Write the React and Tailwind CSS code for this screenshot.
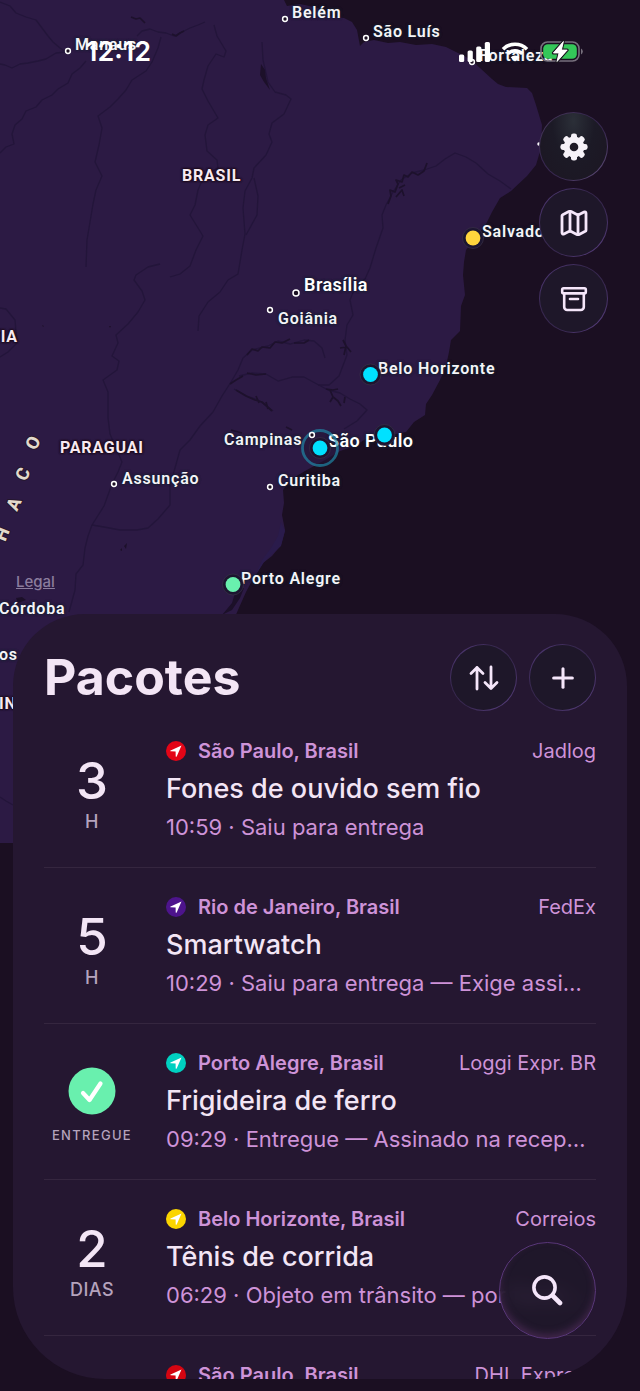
import { Map, Plus } from "lucide-react";

const cities = [
  { name: "Belém", x: 285, y: 19, dx: 7, dy: -6 },
  { name: "São Luís", x: 366, y: 38, dx: 7, dy: -6 },
  { name: "Manaus", x: 68, y: 51, dx: 7, dy: -6 },
  { name: "Fortaleza", x: 472, y: 62, dx: 7, dy: -6 },
  { name: "Goiânia", x: 270, y: 310, dx: 8, dy: 9 },
  { name: "Assunção", x: 114, y: 484, dx: 8, dy: -5 },
  { name: "Curitiba", x: 270, y: 487, dx: 8, dy: -6 },
];

const labels = [
  { name: "Salvador", x: 482, y: 232 },
  { name: "Belo Horizonte", x: 378, y: 369 },
  { name: "Campinas", x: 224, y: 440 },
  { name: "Porto Alegre", x: 241, y: 579 },
  { name: "Córdoba", x: -1, y: 609 },
  { name: "os", x: -1, y: 655 },
];

const bigLabels = [
  { name: "Brasília", x: 304, y: 285 },
  { name: "São Paulo", x: 328, y: 441 },
];

const countries = [
  { name: "BRASIL", x: 182, y: 176 },
  { name: "PARAGUAI", x: 60, y: 448 },
  { name: "TIA", x: -10, y: 337 },
  { name: "IN", x: -1, y: 704 },
];

const rivers = [
  "M0 2 L10 6 L16 13 L26 17 L36 20 L42 28 L48 36 L53 42 L60 48 L66 52 L56 53 L46 59 L38 61 L28 63 L20 64 L12 68 L5 65 L0 64",
  "M86 61 L80 68 L72 74 L68 83 L58 89 L52 95 L42 100 L36 107 L26 111 L22 119 L15 125 L12 134 L14 144 L6 147 L0 153",
  "M137 36 L142 31 L150 29 L158 32 L166 33 L174 36 L182 32 L190 28 L198 25 L205 22",
  "M161 37 L158 48 L152 62 L146 71 L132 80 L126 90 L118 99 L110 107 L98 116 L102 128 L99 145 L95 162 L102 176 L96 190 L93 204 L90 222 L87 240 L86 267",
  "M214 25 L217 36 L226 51 L224 57 L216 54 L208 66 L204 80 L202 89 L208 101 L218 118 L208 125 L205 135 L207 151 L217 160 L218 168 L204 176 L198 190 L195 205 L190 215 L203 236 L196 250 L190 266 L180 274 L170 277",
  "M262 42 L263 60 L268 82 L275 92 L286 95 L291 99 L284 114 L272 123 L269 134 L272 142 L266 155 L254 168 L252 178 L245 191 L243 208 L245 234 L242 250 L238 274 L228 280 L220 292 L208 302 L199 316 L198 331",
  "M254 178 L258 196 L257 215 L246 235",
  "M160 264 L148 267 L136 275 L134 280 L142 291 L145 300 L138 312 L128 324 L116 335 L118 343 L112 356 L119 361 L117 370 L103 380 L108 392 L108 418 L110 434 L116 448 L122 462 L118 472 L112 484 L104 506 L92 525 L88 536 L85 548 L83 565 L76 574 L75 590 L69 612",
  "M511 189 L500 181 L488 174 L476 163 L466 157 L455 153 L445 159 L436 166 L424 170 L412 173 L401 180 L393 192 L386 205 L382 215 L383 228 L376 248 L370 268 L365 279 L356 285 L350 300 L353 315 L347 325 L345 340 L347 355 L339 376 L329 385 L318 385",
  "M325 358 L322 348 L314 341 L304 340 L290 344 L278 341 L268 346 L252 350 L243 358 L238 370 L231 382 L222 396 L213 412 L200 426 L190 440 L180 450 L175 468 L170 485 L170 505 L158 519 L148 528 L137 530 L120 530 L104 527 L92 525",
  "M239 376 L252 373 L266 374 L278 381 L292 377 L304 377 L315 383 L328 390 L340 393 L350 399 L360 404 L367 410 L357 421 L344 429",
  "M234 389 L247 396 L258 400 L267 406 L273 411",
  "M0 797 L6 801 L13 805 M0 357 L8 352 L17 343 L15 320 L6 309 L0 308",
];

// flooded stretches of the rivers, darker and more ragged
const reservoirs = [
  "M388 204 L391 196 L390 190 L395 192 L398 184 L396 180 L402 182 L404 175 L408 177 L412 172 L418 175 L424 171 L427 163",
  "M396 197 L402 190 L404 196 M399 188 L405 185",
  "M131 17 L136 19 L140 18 L145 23",
  "M172 34 L176 36 L180 33 L184 31",
  "M343 340 L346 346 L344 355 M340 348 L347 347 L351 352",
  "M247 355 L252 349 L258 351 L262 347 L270 348 L275 342 L282 343 L290 339 M294 343 L304 343 L309 340",
  "M230 384 L236 380 L243 376 M247 373 L256 375 L266 374",
  "M236 390 L246 396 L255 400 L262 402 L272 411 M256 396 L259 403 M266 402 L268 409",
  "M326 389 L333 390 L338 389 M330 390 L333 397 L330 402 M333 397 L338 401 L341 406 M345 397 L344 403",
  "M231 430 L242 433 M286 427 L292 430",
];

const lakes = [
  "M261 64 L265 70 L266 78 L270 90 L264 82 L260 75 Z",
  "M120 550 L122 548 L122 551 Z M124 546 L127 543 L126 549 Z",
  "M237 586 L244 588 L240 598 L232 610 L222 615 L232 603 Z",
  "M42 325 L44 326 L43 327 Z M109 326 L111 326 L110 328 Z",
  "M16 598 L22 597 L26 600 L18 603 Z",
];

const packages = [
  { count: "3", unit: "H", pin: "bg-[#e30517]", place: "São Paulo, Brasil", carrier: "Jadlog", title: "Fones de ouvido sem fio", status: "10:59 · Saiu para entrega" },
  { count: "5", unit: "H", pin: "bg-[#4d148c]", place: "Rio de Janeiro, Brasil", carrier: "FedEx", title: "Smartwatch", status: "10:29 · Saiu para entrega — Exige assinatura" },
  { delivered: true, unit: "ENTREGUE", pin: "bg-[#00d0c0]", place: "Porto Alegre, Brasil", carrier: "Loggi Expr. BR", title: "Frigideira de ferro", status: "09:29 · Entregue — Assinado na recepção" },
  { count: "2", unit: "DIAS", pin: "bg-[#fbd500]", place: "Belo Horizonte, Brasil", carrier: "Correios", title: "Tênis de corrida", status: "06:29 · Objeto em trânsito — por favor aguarde" },
  { count: "4", unit: "DIAS", pin: "bg-[#d40511]", place: "São Paulo, Brasil", carrier: "DHL Express", title: "Cafeteira", status: "05:10 · Em trânsito" },
];

const Label = ({ x, y, className, children }) => (
  <span
    className={`absolute -translate-y-1/2 whitespace-nowrap ${className}`}
    style={{ left: x, top: y }}
  >
    {children}
  </span>
);

const cityText = "text-base font-semibold tracking-wider text-[#f4f4f8] [text-shadow:0_0_3px_#14202f,0_0_3px_#14202f]";
const bigCityText = "text-lg font-semibold tracking-wide text-white [text-shadow:0_0_3px_#14202f,0_0_3px_#14202f]";
const countryText = "text-base font-bold tracking-wider text-[#f7e9f1] [text-shadow:0_0_2px_#1c0a14,0_0_2px_#1c0a14,0_0_2px_#1c0a14,0_0_3px_#1c0a14]";

const Pin = ({ x, y, color }) => (
  <g>
    <circle cx={x} cy={y} r="10.5" fill="#1c1530" stroke="#3a3047" strokeWidth="0.7" />
    <circle cx={x} cy={y} r="7.4" fill={color} />
  </g>
);

const CityDot = ({ x, y, r = 2.4 }) => (
  <circle cx={x} cy={y} r={r} fill="#1b0f22" stroke="#fff" strokeWidth="1.5" />
);

const MapView = () => (
  <div className="absolute inset-0 overflow-hidden font-[Roboto,sans-serif]">
    <svg width="640" height="900" viewBox="0 0 640 900" className="absolute top-0 left-0" aria-hidden="true">
      <path
        d="M0 0 H284 L287 6 L300 4 L318 8 L330 16 L344 18 L352 22 L357 30 L360 46 L364 42 L374 40 L388 43 L400 42 L416 45 L432 44 L446 47 L458 53 L470 59 L480 68 L492 79 L498 84 L506 87 L527 88 L532 93 L536 105 L542 125 L541 148 L536 165 L527 176 L511 191 L500 198 L492 212 L486 224 L474 240 L466 250 L464 262 L463 275 L465 295 L461 306 L460 331 L451 340 L449 352 L446 366 L440 380 L432 395 L426 404 L425 415 L414 422 L406 432 L385 436 L370 436 L355 446 L340 451 L325 460 L305 471 L290 480 L283 490 L284 503 L282 515 L285 530 L281 545 L272 556 L263 563 L254 577 L246 592 L238 610 L225 640 L150 843 H0 Z"
        fill="#2c1a44"
      />
      <path d="M281 522 L285 531 L281 546 L264 562 L254 578 L262 560 L271 548 L278 536 Z" fill="#2a1b4b" />
      <g fill="none" stroke="#23153a" strokeWidth="1.3" strokeLinejoin="round">
        {rivers.map((d) => (
          <path key={d} d={d} />
        ))}
      </g>
      <g fill="none" stroke="#1d112c" strokeWidth="1.7" strokeLinejoin="round">
        {reservoirs.map((d) => (
          <path key={d} d={d} />
        ))}
      </g>
      <g fill="#1c1029">
        {lakes.map((d) => (
          <path key={d} d={d} />
        ))}
      </g>
      <circle cx="320" cy="448" r="17.5" fill="#221638" fillOpacity="0.5" />
    </svg>

    {cities.map((c) => (
      <Label key={c.name} x={c.x + c.dx} y={c.y + c.dy} className={cityText}>{c.name}</Label>
    ))}
    {labels.map((c) => (
      <Label key={c.name} x={c.x} y={c.y} className={cityText}>{c.name}</Label>
    ))}
    {bigLabels.map((c) => (
      <Label key={c.name} x={c.x} y={c.y} className={bigCityText}>{c.name}</Label>
    ))}
    {countries.map((c) => (
      <Label key={c.name} x={c.x} y={c.y} className={countryText}>{c.name}</Label>
    ))}

    <svg width="640" height="900" viewBox="0 0 640 900" className="absolute top-0 left-0">
      <g fill="#e3d9cc" stroke="#24172b" strokeWidth="2" paintOrder="stroke" fontSize="18" fontWeight="800" textAnchor="middle">
        <text transform="translate(33 443) rotate(-62)" y="6">O</text>
        <text transform="translate(23 474) rotate(-64)" y="6">C</text>
        <text transform="translate(14 504) rotate(-66)" y="6">A</text>
        <text transform="translate(2 534) rotate(-68)" y="6">H</text>
      </g>
      {cities.map((c) => (
        <CityDot key={c.name} x={c.x} y={c.y} />
      ))}
      <CityDot x={296} y={293} r={3} />
      <CityDot x={539} y={144} r={1} />
      <circle cx="320" cy="448" r="17.5" fill="none" stroke="#1f8fae" strokeOpacity="0.65" strokeWidth="2.8" />
      <CityDot x={312} y={435} />
      <Pin x={320} y={448} color="#00e1ff" />
      <Pin x={370.5} y={374.5} color="#00e1ff" />
      <Pin x={384.5} y={435} color="#00e1ff" />
      <Pin x={473} y={238} color="#ffd53d" />
      <Pin x={233} y={584.5} color="#69f0ae" />
    </svg>
  </div>
);

const StatusBar = () => (
  <div className="relative flex h-[104px] items-center justify-between pr-14 pl-[86px]">
    <time className="text-[27px] leading-8 font-semibold text-white">12:12</time>
    <div className="flex items-center gap-[11px]">
      <svg width="31" height="20" viewBox="0 0 31 20" fill="#fff" aria-label="Sinal">
        <rect x="0" y="12.5" width="5.2" height="7.5" rx="1.6" />
        <rect x="8.6" y="8.5" width="5.2" height="11.5" rx="1.6" />
        <rect x="17.2" y="4.5" width="5.2" height="15.5" rx="1.6" />
        <rect x="25.8" y="0" width="5.2" height="20" rx="1.6" />
      </svg>
      <svg width="28" height="20" viewBox="0 0 28 20" aria-label="Wi-Fi">
        <path d="M2 7.2 A17 17 0 0 1 26 7.2" fill="none" stroke="#fff" strokeWidth="3.6" />
        <path d="M6.6 11.8 A10.5 10.5 0 0 1 21.4 11.8" fill="none" stroke="#fff" strokeWidth="3.4" />
        <path d="M14 19.5 L9.7 15.2 A6.2 6.2 0 0 1 18.3 15.2 Z" fill="#fff" />
      </svg>
      <svg width="44" height="24" viewBox="0 0 44 24" aria-label="Bateria">
        <rect x="1" y="2" width="38" height="19" rx="6.5" fill="none" stroke="#77707d" strokeWidth="1.6" />
        <rect x="3.2" y="4.2" width="33.6" height="14.6" rx="4.6" fill="#34c759" />
        <path d="M41 8.5 A3.4 3.4 0 0 1 41 14.5 Z" fill="#77707d" />
        <path d="M23.4 1.5 L13.4 13 H19 L17 21.5 L27.2 10 H21.4 Z" fill="#fff" stroke="#1b1720" strokeWidth="3" strokeLinejoin="round" paintOrder="stroke" />
        <path d="M23.4 1.5 L13.4 13 H19 L17 21.5 L27.2 10 H21.4 Z" fill="#fff" stroke="#fff" strokeWidth="0.8" strokeLinejoin="round" />
      </svg>
    </div>
  </div>
);

const ringButton =
  "flex items-center justify-center rounded-full border border-transparent text-[#f5e6fa] [background:linear-gradient(#1e1729,#1e1729)_padding-box,linear-gradient(135deg,#573e80,#382850_35%,#382850_60%,#60448a)_border-box]";
const glassButton =
  "flex items-center justify-center rounded-full border border-transparent text-[#f6f2f8] [background:radial-gradient(ellipse_at_50%_12%,#2b2f38,#1c1a26_45%,#1c1622)_padding-box,linear-gradient(135deg,#4b3d5c,#382850_35%,#382850_60%,#665480)_border-box]";

const GearIcon = () => (
  <svg width="28" height="28" viewBox="-14 -14 28 28" aria-hidden="true">
    <g fill="#f6f2f8">
      {[0, 45, 90, 135].map((a) => (
        <rect key={a} x="-3" y="-13.6" width="6" height="27.2" rx="2.4" transform={`rotate(${a})`} />
      ))}
      <circle r="10.4" />
    </g>
    <circle r="4.3" fill="#1e1a26" />
  </svg>
);

const BoxIcon = () => (
  <svg width="28" height="26" viewBox="0 0 28 26" fill="none" stroke="currentColor" strokeWidth="2.6" strokeLinecap="round" strokeLinejoin="round" aria-hidden="true">
    <rect x="2.2" y="2.2" width="23.6" height="5.2" rx="1.4" />
    <path d="M4.2 7.6 V21 A3 3 0 0 0 7.2 24 H20.8 A3 3 0 0 0 23.8 21 V7.6" />
    <path d="M10 13 H18" />
  </svg>
);

const MapButtons = () => (
  <nav className="relative mt-2 mr-8 flex flex-col gap-[7px] self-end">
    <button aria-label="Ajustes" className={`${glassButton} size-[69px]`}>
      <GearIcon />
    </button>
    <button aria-label="Mapa" className={`${ringButton} size-[69px]`}>
      <Map size={32} strokeWidth={2.1} />
    </button>
    <button aria-label="Arquivo" className={`${ringButton} size-[69px]`}>
      <BoxIcon />
    </button>
  </nav>
);

const SortIcon = () => (
  <svg width="30" height="26" viewBox="0 0 30 26" fill="none" stroke="currentColor" strokeWidth="2.8" strokeLinecap="round" strokeLinejoin="round" aria-hidden="true">
    <path d="M8 24 V2.5 M2 8.5 L8 2.5 L14 8.5" />
    <path d="M22 2 V23.5 M16 17.5 L22 23.5 L28 17.5" />
  </svg>
);

const PackageRow = ({ item }) => (
  <li className="flex gap-[26px] border-b border-[#35263f] py-6">
    <div className="flex w-24 shrink-0 flex-col items-center justify-center pt-2">
      {item.delivered ? (
        <>
          <svg width="48" height="48" viewBox="0 0 48 48" aria-hidden="true">
            <circle cx="24" cy="24" r="23.5" fill="#69f0ae" />
            <path d="M15 26 L21.5 33 L32.5 16.5" fill="none" stroke="#fff" strokeWidth="4.2" strokeLinecap="round" strokeLinejoin="round" />
          </svg>
          <span className="mt-3 text-[13px] leading-4 font-medium tracking-widest text-[#b5a3bd]">{item.unit}</span>
        </>
      ) : (
        <>
          <span className="text-[51px] leading-[58px] font-medium text-[#f3e5f5]">{item.count}</span>
          <span className="text-lg leading-6 font-medium tracking-wide text-[#b5a3bd]">{item.unit}</span>
        </>
      )}
    </div>
    <div className="min-w-0 flex-1">
      <div className="flex items-center text-xl leading-[30px] text-[#ce93d8]">
        <span className={`mr-3 flex size-5 shrink-0 items-center justify-center rounded-full ${item.pin}`}>
          <svg width="12" height="12" viewBox="0 0 12 12" aria-hidden="true">
            <path d="M11.5 0.6 L0.6 5.4 C0 5.7 0.2 6.3 0.8 6.3 L5.6 6.4 L5.7 11.2 C5.7 11.8 6.4 12 6.7 11.4 Z" fill="#fff" />
          </svg>
        </span>
        <span className="truncate font-semibold">{item.place}</span>
        <span className="ml-auto pl-3 whitespace-nowrap">{item.carrier}</span>
      </div>
      <h2 className="truncate text-[27px] leading-[46px] font-medium text-[#f3e5f5]">{item.title}</h2>
      <p className="mr-2 truncate text-[22px] leading-[31px] text-[#ce93d8]">{item.status}</p>
    </div>
  </li>
);

export default function App() {
  return (
    <main className="relative flex h-screen flex-col overflow-hidden bg-[#1b0f22] font-[Inter,sans-serif]">
      <MapView />
      <StatusBar />
      <MapButtons />
      <div className="relative flex flex-1 items-end">
        <a href="#legal" className="mb-5 ml-4 text-[15px] leading-6 font-medium text-[#8b7d9d] underline">Legal</a>
      </div>

      <section className="relative mx-[13px] mb-3 h-[55vh] shrink-0 overflow-hidden rounded-t-[72px] rounded-b-[92px] bg-[#251731] px-[31px] pt-[30px]">
        <header className="flex h-[68px] items-center gap-3">
          <h1 className="flex-1 text-[50px] leading-[67px] font-bold text-[#f3e5f5]">Pacotes</h1>
          <button aria-label="Ordenar" className={`${ringButton} size-[67px]`}>
            <SortIcon />
          </button>
          <button aria-label="Adicionar" className={`${ringButton} size-[67px]`}>
            <Plus size={32} strokeWidth={2.3} />
          </button>
        </header>
        <ul>
          {packages.map((item, i) => (
            <PackageRow key={i} item={item} />
          ))}
        </ul>
        <button
          aria-label="Buscar"
          className="absolute right-[31px] bottom-10 flex size-[97px] items-center justify-center rounded-full border border-[#5a387a] bg-[#1f1729]/85 text-[#f5e6fa] shadow-[inset_0_-4px_7px_#40264a] backdrop-blur-sm"
        >
          <svg width="31" height="31" viewBox="0 0 31 31" fill="none" stroke="currentColor" strokeLinecap="round" aria-hidden="true">
            <circle cx="12.5" cy="12.5" r="10.6" strokeWidth="3.6" />
            <path d="M20.5 20.5 L28 28" strokeWidth="4.6" />
          </svg>
        </button>
      </section>
    </main>
  );
}
